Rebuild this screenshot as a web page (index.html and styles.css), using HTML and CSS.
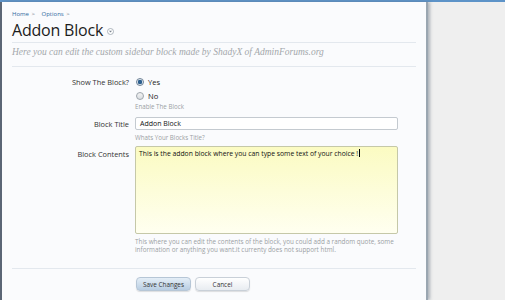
FILE: index.html
```html
<!DOCTYPE html>
<html>
<head>
<meta charset="utf-8">
<link rel="stylesheet" href="styles.css">
</head>
<body>
<div class="topbar"></div>
<div class="stage">
  <div class="panel">
    <div class="crumbs"><span>Home</span> <span class="sep">&gt;</span> <span class="crumb2">Options</span> <span class="sep">&gt;</span></div>
    <h1 class="title">Addon Block <span class="menu-ico"><svg width="7" height="7" viewBox="0 0 7 7"><circle cx="3.5" cy="3.5" r="3" fill="#fff" stroke="#9aa4ae" stroke-width="0.8"/><path d="M2 2.8 L3.5 4.4 L5 2.8 Z" fill="#7b8590"/></svg></span></h1>
    <p class="desc">Here you can edit the custom sidebar block made by ShadyX of AdminForums.org</p>
    <form class="form">
      <div class="row row-radio">
        <label class="lbl">Show The Block?</label>
        <div class="ctl">
          <div class="radio"><span class="rb checked"></span>Yes</div>
          <div class="radio"><span class="rb"></span>No</div>
          <div class="hint">Enable The Block</div>
        </div>
      </div>
      <div class="row row-title">
        <label class="lbl">Block Title</label>
        <div class="ctl">
          <div class="input">Addon Block</div>
          <div class="hint">Whats Your Blocks Title?</div>
        </div>
      </div>
      <div class="row row-contents">
        <label class="lbl">Block Contents</label>
        <div class="ctl">
          <div class="textarea">This is the addon block where you can type some text of your choice !<span class="caret"></span></div>
          <div class="hint help">This where you can edit the contents of the block, you could add a random quote, some information or anything you want.it currenty does not support html.</div>
        </div>
      </div>
      <div class="actions">
        <span class="btn primary">Save Changes</span>
        <span class="btn">Cancel</span>
      </div>
    </form>
  </div>
</div>
</body>
</html>
```
FILE: styles.css
```css
html, body {
  margin: 0;
  padding: 0;
  height: 300px;
  overflow: hidden;
}
body {
  background: #efefef;
  font-family: "Open Sans", "DejaVu Sans", sans-serif;
}
.topbar {
  height: 2px;
  background: #5d93c8;
}
.stage {
  display: flex;
  height: 298px;
}
.panel {
  width: 404px;
  padding: 0 10px 0 10px;
  background: #fafbfd;
  border-left: 2px solid #5b6675;
  box-shadow: 2px 0 0 #9aa6b1, 4px 0 3px rgba(90,105,120,0.45);
}
.crumbs {
  margin-top: 8px;
  height: 8px;
  font-size: 6px;
  line-height: 8px;
  color: #2f6a9d;
}
.crumbs .sep { color: #6a7680; margin: 0 1px; }
.crumbs .crumb2 { margin-left: 4px; }
.title {
  margin: 3px 0 0 0;
  font-family: "Open Sans", sans-serif;
  font-weight: normal;
  font-size: 16px;
  line-height: 17px;
  height: 17px;
  color: #1c1c1c;
  letter-spacing: -0.2px;
}
.menu-ico { display: inline-block; vertical-align: 1px; }
.desc {
  margin: 4px 0 0 0;
  padding: 4px 0 0 0;
  border-top: 1px solid #e3e8ee;
  height: 19px;
  font-family: "Liberation Serif", serif;
  font-style: italic;
  font-size: 9.5px;
  line-height: 10px;
  color: #a3a7ab;
  border-bottom: 1px solid #e3e8ee;
}
.form {
  margin: 0;
  padding-top: 10px;
}
.row {
  display: grid;
  grid-template-columns: 117px 263px;
  column-gap: 6px;
}
.lbl {
  text-align: right;
  font-size: 7.4px;
  color: #333;
  line-height: 10px;
}
.radio {
  display: flex;
  align-items: center;
  font-size: 7.6px;
  color: #222;
  height: 10px;
  line-height: 10px;
  margin-bottom: 4px;
}
.rb {
  display: inline-block;
  width: 8px;
  height: 8px;
  border-radius: 50%;
  border: 1px solid #9ea6ad;
  background: linear-gradient(#f3f3f3, #d9dde1);
  margin: 0 4px 0 1px;
  box-sizing: border-box;
}
.rb.checked {
  border-color: #6f8397;
  background: radial-gradient(circle, #2d5f8e 0 2px, #dfe7ef 2.4px);
}
.hint {
  font-size: 6.2px;
  color: #9a9fa4;
  line-height: 9px;
}
.row-radio .hint { margin-top: -3px; }
.row-title { margin-top: 6px; }
.row-title .lbl { line-height: 14px; }
.input {
  height: 13px;
  border: 1px solid #c4cad0;
  border-radius: 2px;
  background: #fff;
  box-sizing: border-box;
  font-size: 7px;
  line-height: 11px;
  padding-left: 4px;
  color: #111;
}
.row-title .hint { margin-top: 3px; }
.row-contents { margin-top: 4px; }
.row-contents .lbl { line-height: 16px; }
.textarea {
  height: 88px;
  border: 1px solid #c5c8a8;
  border-radius: 2px;
  background: linear-gradient(#fbfbc2, #fffff0);
  box-sizing: border-box;
  font-size: 6.8px;
  line-height: 10px;
  padding: 2px 3px;
  color: #111;
}
.caret {
  display: inline-block;
  width: 1px;
  height: 8px;
  background: #000;
  vertical-align: -1px;
  margin-left: 1px;
}
.help {
  margin-top: 4px;
  line-height: 8px;
  font-size: 6.35px;
}
.actions {
  margin-top: 14px;
  border-top: 1px solid #e3e8ee;
  padding: 8px 0 0 124px;
  display: flex;
  gap: 4px;
}
.btn {
  display: inline-block;
  height: 14px;
  box-sizing: border-box;
  width: 55px;
  text-align: center;
  font-size: 6.4px;
  line-height: 13px;
  color: #333;
  border: 1px solid #c9d0d8;
  border-radius: 4px;
  background: linear-gradient(#ffffff, #e8ecf1);
  box-shadow: 0 1px 1px rgba(0,0,0,0.12);
}
.btn.primary {
  background: linear-gradient(#e4eef7, #b8cde2);
  border-color: #b6c6d6;
}
```
